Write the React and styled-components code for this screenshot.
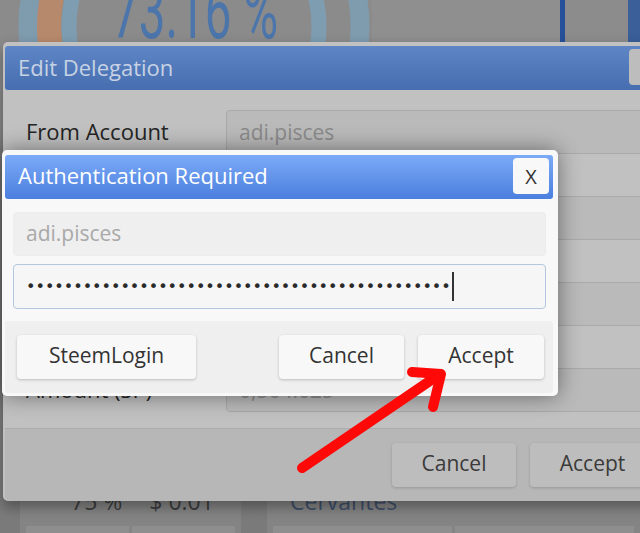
import React from "react";
import styled, { createGlobalStyle } from "styled-components";

const GlobalStyle = createGlobalStyle`
  html, body {
    margin: 0;
    padding: 0;
    background: #7c7c7c;
  }
  body {
    font-family: "Open Sans", "Noto Sans", sans-serif;
  }
  * {
    box-sizing: border-box;
  }
`;

const Page = styled.div`
  position: relative;
  width: 640px;
  height: 533px;
  overflow: hidden;
  display: flex;
  flex-direction: column;
  background: linear-gradient(#8c8c8c, #7a7a7a);
`;

const TopStrip = styled.div`
  height: 42px;
  display: flex;
  align-items: stretch;
  background: #8b8b8b;
`;

const SidePanel = styled.div`
  flex: 1;
  display: flex;
  background: #8f8f8f;
`;

const SideGap = styled.div`
  width: ${(p) => p.$w}px;
  background: ${(p) => p.$c || "transparent"};
`;

const Middle = styled.div`
  flex: 1;
`;

const StatsRow = styled.div`
  height: 53px;
  display: flex;
  gap: 26px;
  padding-left: 20px;
`;

const Card = styled.div`
  width: ${(p) => p.$w}px;
  display: flex;
  flex-direction: column;
  background: #848484;
`;

const CardLine = styled.div`
  height: 36px;
  display: flex;
  align-items: flex-end;
  gap: 27px;
  padding: 0 0 0 ${(p) => p.$pad}px;
  font-size: 23px;
  line-height: 30px;
  color: ${(p) => p.$c};
`;

const CardCells = styled.div`
  flex: 1;
  display: flex;
  gap: 3px;
  padding: 10px 6px 0;
`;

const Cell = styled.div`
  flex: 1;
  background: #8e8e8e;
`;

/* ---------- Edit Delegation (dimmed, behind) ---------- */

const EditDialog = styled.div`
  position: absolute;
  top: 42px;
  left: 3px;
  width: 668px;
  background: #c1c1c1;
  border-radius: 5px;
  padding: 4px 2px 0;
  box-shadow: 0 6px 14px rgba(0, 0, 0, 0.35);
`;

const TitleBar = styled.div`
  height: 44px;
  display: flex;
  align-items: center;
  justify-content: space-between;
  padding: 0 4px ${(p) => (p.$auth ? 5 : 2)}px 13px;
  border-radius: 3px;
  font-size: 22px;
  color: ${(p) => (p.$auth ? "#ffffff" : "#c8d2e3")};
  background: ${(p) =>
    p.$auth
      ? "linear-gradient(#7baaf7, #4b7fde)"
      : "linear-gradient(#5e86c6, #466eb0)"};
`;

const CloseButton = styled.div`
  width: 36px;
  height: 36px;
  margin-top: ${(p) => (p.$dim ? 0 : 3)}px;
  border-radius: 4px;
  display: flex;
  align-items: center;
  justify-content: center;
  font-size: 20px;
  color: #333;
  background: ${(p) => (p.$dim ? "#bdbdbd" : "#f8f8f8")};
`;

const EditBody = styled.div`
  display: flex;
  flex-direction: column;
  gap: 42px;
  padding: 20px 14px 16px 21px;
`;

const FormRow = styled.div`
  display: grid;
  grid-template-columns: 200px 1fr;
  align-items: center;
`;

const Label = styled.div`
  font-size: 22px;
  color: #242424;
  padding-bottom: 2px;
`;

const DimInput = styled.div`
  height: 44px;
  display: flex;
  align-items: center;
  padding-left: 12px;
  border: 1px solid #a9a9a9;
  border-radius: 4px;
  background: #bababa;
  font-size: 21px;
  color: #8a8a8a;
`;

const Footer = styled.div`
  display: flex;
  align-items: center;
  justify-content: ${(p) => (p.$split ? "space-between" : "flex-end")};
  gap: 14px;
  padding: 14px ${(p) => (p.$split ? 9 : 14)}px 14px ${(p) => (p.$split ? 12 : 14)}px;
  background: ${(p) => (p.$dim ? "#b7b7b7" : "#efefef")};
  border-top: ${(p) => (p.$dim ? "1px solid #acacac" : "none")};
  border-radius: ${(p) => (p.$dim ? "0 0 5px 5px" : "3px")};
`;

const ButtonGroup = styled.div`
  display: flex;
  gap: 14px;
`;

const Button = styled.div`
  width: ${(p) => p.$w}px;
  height: 44px;
  display: flex;
  align-items: center;
  justify-content: center;
  padding-bottom: 4px;
  border-radius: 4px;
  font-size: 21px;
  color: ${(p) => (p.$dim ? "#3a3a3a" : "#333")};
  background: ${(p) => (p.$dim ? "#bdbdbd" : "#f8f8f8")};
  box-shadow: 0 1px 3px rgba(0, 0, 0, ${(p) => (p.$dim ? 0.18 : 0.22)});
`;

/* ---------- Authentication Required (active) ---------- */

const AuthDialog = styled.div`
  position: absolute;
  top: 150px;
  left: 2px;
  width: 556px;
  padding: 5px 5px 3px 3px;
  background: #f8f8f8;
  border-radius: 5px;
  box-shadow: 0 0 22px rgba(0, 0, 0, 0.45);
`;

const AuthBody = styled.div`
  display: flex;
  flex-direction: column;
  gap: 8px;
  padding: 13px 7px 12px 8px;
`;

const Field = styled.div`
  position: relative;
  height: ${(p) => (p.$focus ? 45 : 44)}px;
  display: flex;
  align-items: center;
  padding-left: 12px;
  padding-bottom: ${(p) => (p.$focus ? 0 : 3)}px;
  border-radius: 4px;
  border: 1px solid ${(p) => (p.$focus ? "#b3c7e0" : "#ececec")};
  background: ${(p) => (p.$focus ? "#f6f6f6" : "#efefef")};
  font-size: 21px;
  color: #a9a9a9;
`;

const Dots = styled.span`
  font-family: "DejaVu Sans", sans-serif;
  font-size: 16px;
  letter-spacing: 0px;
  color: #2a2a2a;
`;

const Caret = styled.span`
  display: inline-block;
  width: 2px;
  height: 29px;
  margin-left: 1px;
  background: #333;
`;

const Arrow = styled.svg`
  position: absolute;
  top: 0;
  left: 0;
  pointer-events: none;
`;

const Gauge = () => (
  <svg width="372" height="42" viewBox="0 0 372 42">
    <circle cx="194" cy="26" r="166" fill="none" stroke="#7f9bae" strokeWidth="19" />
    <path
      d="M194 -119 A145 145 0 0 0 194 171"
      fill="none"
      stroke="#b7896c"
      strokeWidth="24"
    />
    <circle cx="194" cy="26" r="125" fill="none" stroke="#7e9db1" strokeWidth="15" />
    <text
      x="112"
      y="38"
      fontFamily="Roboto, sans-serif"
      fontSize="78"
      fill="#4b75ab"
      textLength="166"
      lengthAdjust="spacingAndGlyphs"
    >
      73.16 %
    </text>
  </svg>
);

const rows = [
  ["From Account", "adi.pisces"],
  ["To Account", ""],
  ["Delegated", ""],
  ["Amount (SP)", "0,564.025"],
];

export default function App() {
  return (
    <>
      <GlobalStyle />
      <Page>
        <TopStrip>
          <Gauge />
          <SidePanel>
            <SideGap $w={188} />
            <SideGap $w={5} $c="#26509a" />
            <SideGap $w={63} $c="#8c8c8c" />
            <SideGap $w={12} $c="#3a5f99" />
          </SidePanel>
        </TopStrip>
        <Middle />
        <StatsRow>
          <Card $w={221}>
            <CardLine $pad={51} $c="#3d3d3d">
              <span>75 %</span>
              <span>$ 0.01</span>
            </CardLine>
            <CardCells>
              <Cell />
              <Cell />
            </CardCells>
          </Card>
          <Card $w={373}>
            <CardLine $pad={23} $c="#3f4f6a">
              <span>Cervantes</span>
            </CardLine>
            <CardCells>
              <Cell />
              <Cell />
            </CardCells>
          </Card>
        </StatsRow>

        <EditDialog>
          <TitleBar>
            <span>Edit Delegation</span>
            <CloseButton $dim>x</CloseButton>
          </TitleBar>
          <EditBody>
            {rows.map(([label, value]) => (
              <FormRow key={label}>
                <Label>{label}</Label>
                <DimInput>{value}</DimInput>
              </FormRow>
            ))}
          </EditBody>
          <Footer $dim>
            <Button $dim $w={124}>Cancel</Button>
            <Button $dim $w={125}>Accept</Button>
          </Footer>
        </EditDialog>

        <AuthDialog>
          <TitleBar $auth>
            <span>Authentication Required</span>
            <CloseButton>X</CloseButton>
          </TitleBar>
          <AuthBody>
            <Field>adi.pisces</Field>
            <Field $focus>
              <Dots>{"\u2022".repeat(45)}</Dots>
              <Caret />
            </Field>
          </AuthBody>
          <Footer $split>
            <Button $w={179}>SteemLogin</Button>
            <ButtonGroup>
              <Button $w={125}>Cancel</Button>
              <Button $w={126}>Accept</Button>
            </ButtonGroup>
          </Footer>
        </AuthDialog>

        <Arrow width="640" height="533" viewBox="0 0 640 533">
          <g
            fill="none"
            stroke="#ff0808"
            strokeWidth="10"
            strokeLinecap="round"
            strokeLinejoin="round"
          >
            <path d="M302 468 L440 374" />
            <path d="M412 372 L441 374 L433 407" />
          </g>
        </Arrow>
      </Page>
    </>
  );
}
